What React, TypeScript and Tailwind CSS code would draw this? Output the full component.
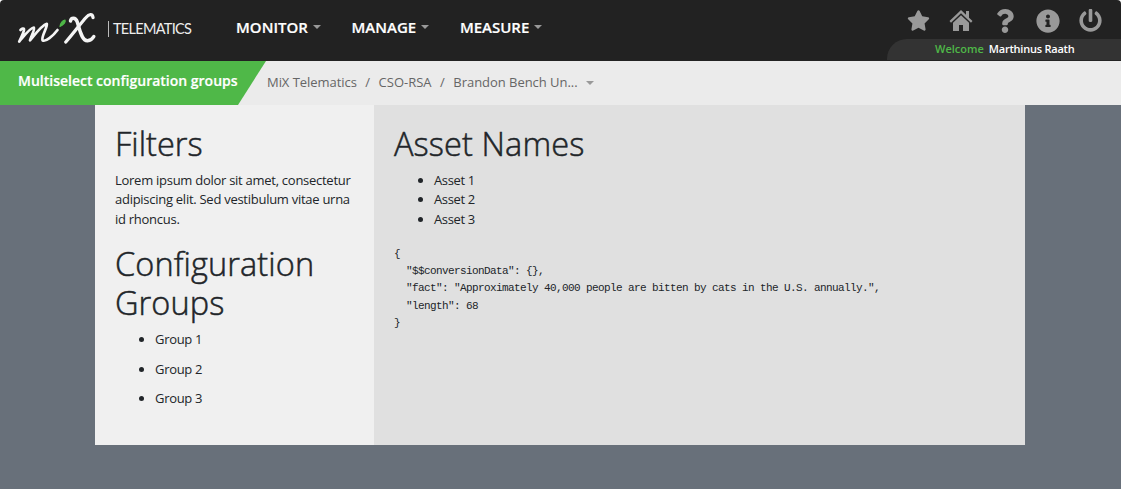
import React from "react";
import { FaStar, FaQuestion, FaInfoCircle, FaPowerOff } from "react-icons/fa";

const Caret = ({ className = "" }: { className?: string }) => (
  <span
    className={`inline-block h-0 w-0 border-x-4 border-t-4 border-x-transparent border-t-[#999999] ${className}`}
  />
);

const Logo = () => (
  <svg width="80" height="34" viewBox="0 0 80 34" fill="none" stroke="#f4f4f4" strokeLinecap="round" strokeLinejoin="round">
    <path d="M3.500 20C5 18.500 7 17.800 7 19.500C7 22 4.500 27 2.200 31.500C7 26 13.500 17.500 16.800 17.500C18.300 19 14.500 25.500 13 30.500C18 24.500 25 15 29.800 13.800C31 16.500 24 26.500 25.500 30.300C28.500 32.300 36 26 40.500 20" strokeWidth="2.700" />
    <path d="M53.500 11C54 7.500 58.500 6.500 60.300 12C63 21 65 31 70.500 30.800C73.500 30.500 75.500 28.800 76.800 26.500" strokeWidth="3.500" />
    <path d="M76 7.500C75.500 3.500 72 4 69 7.500C64 13 56 24 48.800 32" strokeWidth="3.300" />
    <path d="M43 16.500C43.500 13.500 45.500 10.500 48 10C49 12 46.500 15 43 16.500Z" fill="#4fb848" stroke="#4fb848" strokeWidth="1.200" />
  </svg>
);

const HomeIcon = () => (
  <svg width="24" height="24" viewBox="0 0 24 24" fill="#999999">
    <path d="M12 1L17 5.800V2H20V8.700L23.500 12L22 13.800L12 4.300L2 13.800L.5 12Z" />
    <path d="M12 6.200L20 13.800V22H14V16H10V22H4V13.800Z" />
  </svg>
);

const menus = ["MONITOR", "MANAGE", "MEASURE"];
const json = `{
  "$$conversionData": {},
  "fact": "Approximately 40,000 people are bitten by cats in the U.S. annually.",
  "length": 68
}`;

export default function App() {
  return (
    <div className="min-h-[489px] bg-[#68707a] font-['Open_Sans',sans-serif] text-[13px] leading-[19.5px] text-[#212529]">
      <div className="bg-white">
        <header className="flex h-[61px] justify-between overflow-hidden rounded-t-[4px] bg-[#222222]">
          <div className="flex">
            <div className="flex w-[236px] pt-[10px] pl-[17px]">
              <Logo />
              <div className="mt-[11px] ml-[11px] h-4 w-px bg-[#bbbbbb]" />
              <span className="mt-[9px] ml-1 font-['Lato',sans-serif] text-[14.5px] leading-5 tracking-[-0.7px] text-[#eeeeee]">TELEMATICS</span>
            </div>
            <nav className="flex items-start gap-[30.7px] pt-[17px] text-[15px] leading-5 font-semibold text-white [-webkit-text-stroke:0.2px]">
              {menus.map((m) => (
                <div key={m} className="flex items-center">
                  {m}
                  <Caret className="ml-[5px]" />
                </div>
              ))}
            </nav>
          </div>
          <div className="flex w-[234px] flex-col">
            <div className="flex h-[39px] items-center justify-between pt-[2px] pr-[19px] pl-[20px] text-[#999999]">
              <FaStar size={23} />
              <HomeIcon />
              <FaQuestion size={24} />
              <FaInfoCircle size={24} />
              <FaPowerOff size={23} />
            </div>
            <div className="flex h-[21px] gap-[6px] rounded-tl-[20px] bg-[#333333] pl-12 text-[11px] leading-5 font-semibold text-white">
              <span className="text-[#4fb848]">Welcome</span>
              <span className="-ml-px tracking-[-0.22px]">Marthinus Raath</span>
            </div>
          </div>
        </header>
      </div>
      <div className="flex h-11 bg-[#ebebeb]">
        <h1 className="w-[266px] bg-[#4fb848] pl-[18px] text-[14px] leading-10 font-semibold text-white [-webkit-text-stroke:0.2px] [clip-path:polygon(0_0,100%_0,238px_100%,0_100%)]">
          Multiselect configuration groups
        </h1>
        <div className="flex items-center pl-px text-[13px] text-[#666666]">
          <span className="tracking-[-0.05px]">MiX Telematics</span>
          <span className="mx-[8.5px]">/</span>
          <span>CSO-RSA</span>
          <span className="mx-[8.5px]">/</span>
          <span className="tracking-[-0.04px]">Brandon Bench Un...</span>
          <Caret className="ml-2" />
        </div>
      </div>
      <main className="ml-[95px] flex h-[340px] w-[930px]">
        <section className="w-[279px] bg-[#f0f0f0] px-5 pt-[19px]">
          <h2 className="mb-[7.5px] text-[32.5px] leading-[39px] font-light [-webkit-text-stroke:0.5px]">Filters</h2>
          <p className="mb-[15px] tracking-[-0.27px]">Lorem ipsum dolor sit amet, consectetur adipiscing elit. Sed vestibulum vitae urna id rhoncus.</p>
          <h2 className="mb-2 text-[32.5px] leading-[39px] font-light tracking-[0.1px] [-webkit-text-stroke:0.5px]">Configuration Groups</h2>
          <ul className="list-disc space-y-[10px] pl-10 tracking-[-0.3px]">
            <li>Group 1</li>
            <li>Group 2</li>
            <li>Group 3</li>
          </ul>
        </section>
        <section className="flex-1 bg-[#e0e0e0] px-5 pt-[19px]">
          <h2 className="mb-[7.5px] text-[32.5px] leading-[39px] font-light tracking-[0.1px] [-webkit-text-stroke:0.5px]">Asset Names</h2>
          <ul className="mb-[16.5px] list-disc pl-10 tracking-[-0.35px]">
            <li>Asset 1</li>
            <li>Asset 2</li>
            <li>Asset 3</li>
          </ul>
          <pre className="font-['Liberation_Mono',monospace] text-[11px] leading-[17.4px] tracking-[-0.6px]">{json}</pre>
        </section>
      </main>
    </div>
  );
}
